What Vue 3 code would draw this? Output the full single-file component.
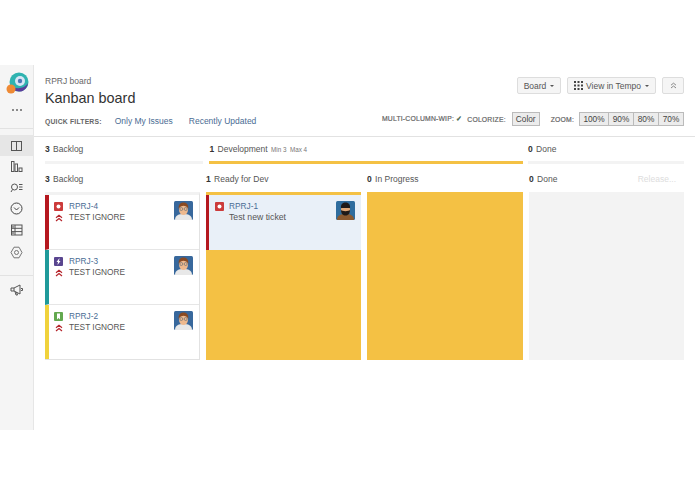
<script setup>
const headers = [
  { count: 3, name: "Backlog", bar: "", span: 158 },
  { count: 1, name: "Development", bar: "yellow", span: 314, limits: true },
  { count: 0, name: "Done", bar: "", span: 156 },
];

const backlog = [
  { key: "RPRJ-4", type: "bug", edge: "#b5181f" },
  { key: "RPRJ-3", type: "epic", edge: "#1f9a9a" },
  { key: "RPRJ-2", type: "story", edge: "#f0d23c" },
];
</script>

<template>
  <div class="page">
    <div class="shell">
      <aside class="sidebar">
        <div class="side-top">
          <svg class="logo" width="24" height="24" viewBox="0 0 24 24">
            <circle cx="14" cy="10" r="9.500" fill="#2fb3b0" />
            <path d="M5 13c3 4 14 5 18-2-1 6-5 9-9 8.500-4 0-8-3-9-6.500z" fill="#5a3d9a" />
            <circle cx="15" cy="9" r="5" fill="#d6e6f5" />
            <circle cx="15" cy="9" r="2.200" fill="#4a78b8" />
            <circle cx="6" cy="17" r="4.500" fill="#ee8a35" />
          </svg>
          <div class="dots"><i></i><i></i><i></i></div>
        </div>
        <nav class="side-nav">
          <div class="nav-item active">
            <svg width="13" height="12" viewBox="0 0 13 12" fill="none" stroke="#555" stroke-width="1">
              <rect x="1.500" y="1.500" width="10" height="9" />
              <path d="M6.500 1.500v9" />
            </svg>
          </div>
          <div class="nav-item">
            <svg width="13" height="13" viewBox="0 0 13 13" fill="none" stroke="#555" stroke-width="1">
              <rect x="1.500" y="1.500" width="2.500" height="10" />
              <rect x="5" y="4" width="2.500" height="7.500" />
              <rect x="9" y="8" width="3" height="3.500" />
            </svg>
          </div>
          <div class="nav-item">
            <svg width="13" height="12" viewBox="0 0 13 12" fill="none" stroke="#555" stroke-width="1">
              <circle cx="4.500" cy="5" r="3" />
              <path d="M2.500 7.500 1 10M9 2.500h3.500M9 5h3.500M9 7.500h3.500" />
            </svg>
          </div>
          <div class="nav-item">
            <svg width="13" height="13" viewBox="0 0 13 13" fill="none" stroke="#444" stroke-width="1">
              <circle cx="6.500" cy="6.500" r="5.500" />
              <path d="m4 5.500 2.500 2.500L9 5.500" />
            </svg>
          </div>
          <div class="nav-item">
            <svg width="13" height="12" viewBox="0 0 13 12" fill="none" stroke="#555" stroke-width="1">
              <rect x="1.500" y="1" width="10.500" height="10" />
              <path d="M1.500 4.300h10.500M1.500 7.600h10.500M5 1v10" />
              <rect x="2" y="1.500" width="2.500" height="2.500" fill="#999" stroke="none" />
              <rect x="2" y="8" width="2.500" height="2.500" fill="#999" stroke="none" />
            </svg>
          </div>
          <div class="nav-item sixth">
            <svg width="13" height="13" viewBox="0 0 13 13" fill="none" stroke="#777" stroke-width="1">
              <path d="M4 1.200h5l3 5.300-3 5.300H4L1 6.500z" />
              <circle cx="6.500" cy="6.500" r="2" />
            </svg>
          </div>
        </nav>
        <div class="side-bottom">
          <svg width="13" height="12" viewBox="0 0 13 12" fill="none" stroke="#555" stroke-width="1">
            <path d="M1 4h3l6-3v9L4 7H1zM4 4v3M5 7.500l1 3.500h1.500l-1-3M11 4.500h1.500v2H11" />
          </svg>
        </div>
      </aside>

      <main class="main">
        <header class="head">
          <div class="title-row">
            <div>
              <div class="crumb">RPRJ board</div>
              <h1>Kanban board</h1>
            </div>
            <div class="actions">
              <button class="btn board-btn">Board <span class="caret"></span></button>
              <button class="btn tempo-btn">
                <svg width="9" height="9" viewBox="0 0 9 9" fill="#444">
                  <rect width="2" height="2" /><rect x="3.500" width="2" height="2" /><rect x="7" width="2" height="2" />
                  <rect y="3.500" width="2" height="2" /><rect x="3.500" y="3.500" width="2" height="2" /><rect x="7" y="3.500" width="2" height="2" />
                  <rect y="7" width="2" height="2" /><rect x="3.500" y="7" width="2" height="2" /><rect x="7" y="7" width="2" height="2" />
                </svg>
                View in Tempo <span class="caret"></span>
              </button>
              <button class="btn square">
                <svg width="7" height="7" viewBox="0 0 7 7" fill="none" stroke="#888" stroke-width="1">
                  <path d="m1 3.200 2.500-2 2.500 2M1 6l2.500-2L6 6" />
                </svg>
              </button>
            </div>
          </div>
          <div class="filter-row">
            <div class="filters">
              <span class="label">QUICK FILTERS:</span>
              <a class="mine">Only My Issues</a>
              <a>Recently Updated</a>
            </div>
            <div class="tools">
              <span class="label">MULTI-COLUMN-WIP: <b class="tick">✓</b></span>
              <span class="label colorize">COLORIZE:</span>
              <span class="mini color">Color</span>
              <span class="label zoom">ZOOM:</span>
              <span class="mini-group">
                <span class="mini wide">100%</span><span class="mini">90%</span><span class="mini">80%</span><span class="mini">70%</span>
              </span>
            </div>
          </div>
        </header>

        <div class="group-row">
          <div v-for="h in headers" :key="h.name" class="group" :style="{ width: h.span + 'px' }">
            <div class="group-text">
              <b>{{ h.count }}</b> {{ h.name }}
              <small v-if="h.limits">Min 3&nbsp; Max 4</small>
            </div>
            <div class="group-bar" :class="h.bar"></div>
          </div>
        </div>

        <div class="col-titles">
          <div class="col-title"><b>3</b> Backlog</div>
          <div class="col-title"><b>1</b> Ready for Dev</div>
          <div class="col-title"><b>0</b> In Progress</div>
          <div class="col-title last"><span><b>0</b> Done</span><em>Release...</em></div>
        </div>

        <div class="board">
          <div class="col backlog">
            <article v-for="c in backlog" :key="c.key" class="card" :style="{ borderLeftColor: c.edge }">
              <div class="card-icons">
                <svg v-if="c.type === 'bug'" width="9" height="9" viewBox="0 0 9 9">
                  <rect width="9" height="9" rx="1" fill="#cc3b3b" /><circle cx="4.500" cy="4.500" r="2" fill="#fff" />
                </svg>
                <svg v-else-if="c.type === 'epic'" width="9" height="9" viewBox="0 0 9 9">
                  <rect width="9" height="9" rx="1" fill="#59458f" /><path d="M5.500 1 2.500 5h1.500L3.500 8l3-4H5z" fill="#fff" />
                </svg>
                <svg v-else width="9" height="9" viewBox="0 0 9 9">
                  <rect width="9" height="9" rx="1" fill="#63a84f" /><path d="M3 1.500h3v6L4.500 6 3 7.500z" fill="#fff" />
                </svg>
                <svg class="chev" width="8" height="8" viewBox="0 0 8 8" fill="none" stroke="#b5232a" stroke-width="1.200">
                  <path d="m1 3.700 3-2.400 3 2.400M1 7l3-2.400L7 7" />
                </svg>
              </div>
              <div class="card-text">
                <a>{{ c.key }}</a>
                <p>TEST IGNORE</p>
              </div>
              <svg class="avatar" width="19" height="19" viewBox="0 0 19 19">
                <rect width="19" height="19" rx="1.500" fill="#38689c" />
                <path d="M1 19c0-5 4-6 8.500-6s8.500 1 8.500 6z" fill="#e8e8e8" />
                <ellipse cx="9.500" cy="8.500" rx="4.500" ry="5.500" fill="#eeb98e" />
                <path d="M4.800 8c-.8-5 2.200-6.500 4.700-6.500S15 3 14.200 8c-.8-2.500-3-3.200-4.700-3.200S5.600 5.500 4.800 8z" fill="#8a4a22" />
                <g fill="none" stroke="#777" stroke-width=".8">
                  <circle cx="7.300" cy="8" r="1.500" />
                  <circle cx="11.700" cy="8" r="1.500" />
                </g>
              </svg>
            </article>
          </div>

          <div class="col yellow-col">
            <article class="card selected">
              <div class="card-icons">
                <svg width="9" height="9" viewBox="0 0 9 9">
                  <rect width="9" height="9" rx="1" fill="#cc3b3b" /><circle cx="4.500" cy="4.500" r="2" fill="#fff" />
                </svg>
              </div>
              <div class="card-text">
                <a>RPRJ-1</a>
                <p class="ticket">Test new ticket</p>
              </div>
              <svg class="avatar" width="19" height="19" viewBox="0 0 19 19">
                <rect width="19" height="19" rx="1.500" fill="#2f6d9e" />
                <path d="M1 19c0-5 4-6 8.500-6s8.500 1 8.500 6z" fill="#8a5a30" />
                <ellipse cx="9.500" cy="8.500" rx="4.500" ry="5.500" fill="#e0a878" />
                <path d="M5 7c-.5-4 2-5.500 4.500-5.500S14.500 3 14 7z" fill="#1f1a18" />
                <path d="M5 9c0 4 2 5.500 4.500 5.500S14 13 14 9c-1 1.500-8 1.500-9 0z" fill="#1f1a18" />
              </svg>
            </article>
          </div>

          <div class="col yellow-col"></div>
          <div class="col done-col"></div>
        </div>
      </main>
    </div>
  </div>
</template>

<style scoped>
.page {
  width: 695px;
  height: 494px;
  padding-top: 65px;
  box-sizing: border-box;
  background: #fff;
  font-family: "Liberation Sans", Arial, sans-serif;
  color: #555;
  overflow: hidden;
}
.shell {
  display: flex;
  height: 365px;
}
.sidebar {
  width: 34px;
  flex: none;
  box-sizing: border-box;
  background: #f5f5f5;
  border-right: 1px solid #e6e6e6;
  display: flex;
  flex-direction: column;
}
.side-top {
  height: 64px;
  border-bottom: 1px solid #e2e2e2;
  display: flex;
  flex-direction: column;
  align-items: center;
  padding-top: 7px;
  box-sizing: border-box;
}
.dots {
  display: flex;
  gap: 2px;
  margin-top: 13px;
}
.dots i {
  width: 2px;
  height: 2px;
  background: #666;
  border-radius: 50%;
}
.side-nav {
  padding-top: 6px;
  padding-bottom: 12px;
  border-bottom: 1px solid #e2e2e2;
}
.nav-item {
  height: 21px;
  display: flex;
  align-items: center;
  justify-content: center;
}
.nav-item.active {
  background: #e6e6e6;
}
.nav-item.sixth {
  padding-top: 2px;
}
.side-bottom {
  display: flex;
  justify-content: center;
  padding-top: 8px;
}
.main {
  flex: 1;
  min-width: 0;
  padding: 0 11px;
}
.head {
  height: 72px;
  margin: 0 -11px;
  padding: 0 11px;
  border-bottom: 1px solid #e2e2e2;
  box-sizing: border-box;
}
.title-row {
  display: flex;
  justify-content: space-between;
  padding-top: 11px;
  height: 47px;
  box-sizing: border-box;
}
.crumb {
  font-size: 8.500px;
  line-height: 11px;
  color: #666;
}
h1 {
  margin: 2px 0 0;
  font-size: 14.400px;
  line-height: 18px;
  font-weight: 400;
  color: #333;
}
.actions {
  display: flex;
  gap: 6px;
  align-items: flex-start;
  padding-top: 1px;
}
.btn {
  height: 17px;
  padding: 0;
  border: 1px solid #ddd;
  border-radius: 2px;
  background: #f5f5f5;
  color: #555;
  font: 8.500px "Liberation Sans", Arial, sans-serif;
  display: flex;
  align-items: center;
  justify-content: center;
  gap: 3px;
}
.board-btn {
  width: 44px;
}
.tempo-btn {
  width: 89px;
}
.btn.square {
  width: 22px;
}
.caret {
  width: 0;
  height: 0;
  margin-left: 1px;
  border-left: 2px solid transparent;
  border-right: 2px solid transparent;
  border-top: 2px solid #555;
}
.filter-row {
  display: flex;
  justify-content: space-between;
  align-items: flex-start;
}
.filters {
  display: flex;
  align-items: center;
  padding-top: 4px;
  line-height: 11px;
}
.filters a {
  font-size: 8.500px;
  color: #4a6c94;
}
.filters .mine {
  margin: 0 16px 0 13px;
}
.label {
  font-size: 6.800px;
  letter-spacing: 0.200px;
  font-weight: 700;
  color: #666;
}
.tick {
  color: #2f8a3c;
}
.tools {
  display: flex;
  align-items: center;
  height: 14px;
}
.tools .label {
  font-weight: 400;
  -webkit-text-stroke: 0.200px #666;
}
.colorize {
  margin-left: 5px;
}
.zoom {
  margin-left: 11px;
  margin-right: 6px;
}
.mini {
  width: 26px;
  height: 14px;
  margin-left: -1px;
  box-sizing: border-box;
  text-align: center;
  background: #ececec;
  border: 1px solid #bbb;
  font-size: 8.300px;
  line-height: 12px;
  color: #444;
}
.mini.color {
  width: 28px;
  margin-left: 6px;
}
.mini.wide {
  width: 30px;
}
.mini-group {
  display: flex;
}
.group-row {
  display: flex;
  justify-content: space-between;
  padding-top: 7px;
  height: 35px;
  box-sizing: border-box;
}
.group-text {
  font-size: 8.500px;
  line-height: 11px;
  color: #555;
}
.group:nth-child(2) .group-text {
  padding-left: 1px;
}
.group-text b {
  color: #333;
  margin-right: 1px;
}
.group-text small {
  font-size: 6.300px;
  color: #777;
  margin-left: 1px;
}
.group-bar {
  height: 3px;
  margin-top: 6px;
  background: #f3f3f3;
}
.group-bar.yellow {
  background: #f4c144;
}
.col-titles,
.board {
  display: grid;
  grid-template-columns: 155px 155px 156px 155px;
  column-gap: 6px;
}
.col-titles {
  height: 20px;
  padding-top: 2px;
  box-sizing: border-box;
  font-size: 8.500px;
  line-height: 11px;
  color: #555;
}
.col-title b {
  color: #333;
  margin-right: 1px;
}
.col-title.last {
  display: flex;
  justify-content: space-between;
  padding-right: 8px;
}
.col-title em {
  font-style: normal;
  color: #ddd;
}
.board {
  height: 168px;
}
.col {
  box-sizing: border-box;
}
.backlog {
  border: 1px solid #e2e2e2;
  border-left: 0;
  border-top-width: 3px;
  border-top-color: #f2f2f2;
}
.yellow-col {
  background: #f4c144;
  padding-top: 3px;
}
.done-col {
  background: #f3f3f3;
}
.card {
  height: 55px;
  box-sizing: border-box;
  border-left: 4px solid #b5181f;
  border-bottom: 1px solid #e6e6e6;
  background: #fff;
  display: flex;
  padding: 6px 6px 0 5px;
}
.card:last-child {
  height: 54px;
  border-bottom: 0;
}
.card.selected {
  background: #e9f0f8;
  border-left-width: 3px;
  border-bottom: 0;
  padding-left: 6px;
  height: 55px;
}
.card-icons {
  width: 14px;
  flex: none;
  display: flex;
  flex-direction: column;
  gap: 3px;
  padding-top: 1px;
}
.chev {
  margin-left: 1px;
}
.card-text {
  flex: 1;
  padding-left: 1px;
}
.selected .card-text {
  padding-left: 0;
}
.card-text a {
  display: block;
  font-size: 8.300px;
  line-height: 11px;
  color: #4a6c94;
}
.card-text p {
  margin: 0;
  font-size: 8.300px;
  line-height: 11px;
  color: #555;
}
.card-text p.ticket {
  font-size: 8.700px;
}
.avatar {
  flex: none;
}
</style>

<style>
html, body {
  margin: 0;
  background: #fff;
}
</style>
